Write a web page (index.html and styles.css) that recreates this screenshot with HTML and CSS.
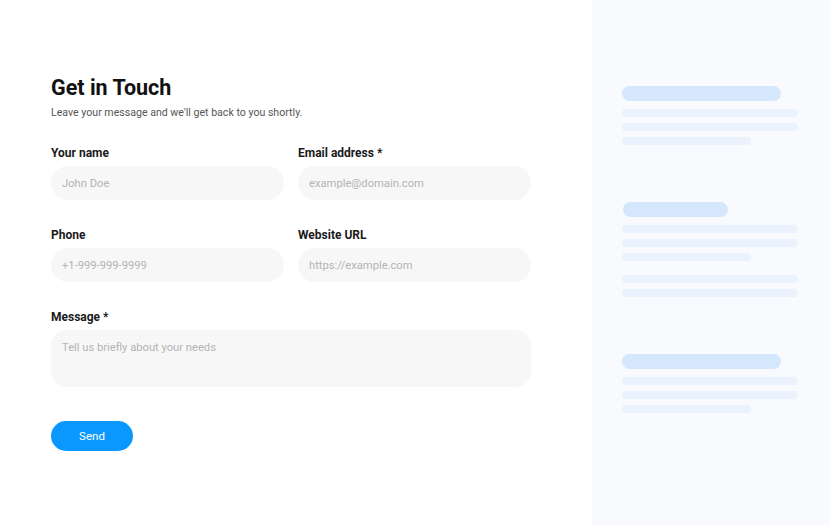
FILE: index.html
```html
<!DOCTYPE html>
<html lang="en">
<head>
<meta charset="utf-8">
<title>Get in Touch</title>
<link rel="stylesheet" href="styles.css">
</head>
<body>
<div class="page">
  <main class="main">
    <h1 class="title">Get in Touch</h1>
    <p class="subtitle">Leave your message and we'll get back to you shortly.</p>
    <form class="form">
      <div class="grid">
        <label class="field">
          <span class="label">Your name</span>
          <input class="input" type="text" placeholder="John Doe">
        </label>
        <label class="field">
          <span class="label">Email address *</span>
          <input class="input" type="email" placeholder="example@domain.com">
        </label>
        <label class="field">
          <span class="label">Phone</span>
          <input class="input" type="tel" placeholder="+1-999-999-9999">
        </label>
        <label class="field">
          <span class="label">Website URL</span>
          <input class="input" type="url" placeholder="https://example.com">
        </label>
        <label class="field field-wide">
          <span class="label">Message *</span>
          <textarea class="textarea" placeholder="Tell us briefly about your needs"></textarea>
        </label>
      </div>
      <button class="send" type="button">Send</button>
    </form>
  </main>
  <aside class="aside">
    <div class="sk-group">
      <div class="sk-title"></div>
      <div class="sk-line"></div>
      <div class="sk-line"></div>
      <div class="sk-line short"></div>
    </div>
    <div class="sk-group">
      <div class="sk-title small"></div>
      <div class="sk-line"></div>
      <div class="sk-line"></div>
      <div class="sk-line short"></div>
      <div class="sk-line para"></div>
      <div class="sk-line"></div>
    </div>
    <div class="sk-group">
      <div class="sk-title"></div>
      <div class="sk-line"></div>
      <div class="sk-line"></div>
      <div class="sk-line short"></div>
    </div>
  </aside>
</div>
</body>
</html>
```

FILE: styles.css
```css
* { box-sizing: border-box; }
html, body { margin: 0; padding: 0; background: #fff; }
body {
  font-family: Roboto, Inter, "Liberation Sans", sans-serif;
  color: #111;
}
.page {
  display: flex;
  width: 830px;
  height: 525px;
  overflow: hidden;
}
.main {
  flex: 0 0 592px;
  padding: 74px 61px 0 51px;
}
.title {
  margin: 0;
  font-size: 21.5px;
  line-height: 28px;
  font-weight: 700;
  color: #111;
}
.subtitle {
  margin: 2px 0 0;
  font-size: 10.6px;
  line-height: 18px;
  color: #555;
}
.form { margin-top: 23px; }
.grid {
  display: grid;
  grid-template-columns: 1fr 1fr;
  column-gap: 14px;
  row-gap: 27px;
  width: 480px;
}
.field { display: flex; flex-direction: column; }
.field-wide { grid-column: 1 / -1; }
.label {
  font-size: 12px;
  line-height: 16px;
  font-weight: 700;
  color: #1a1a1a;
  margin-bottom: 5px;
}
.input, .textarea {
  border: none;
  outline: none;
  background: #f7f7f7;
  font-family: inherit;
  font-size: 11.2px;
  color: #222;
  padding: 0 11px;
  width: 100%;
}
.input {
  height: 34px;
  border-radius: 17px;
}
.textarea {
  height: 57px;
  border-radius: 15px;
  padding-top: 11px;
  resize: none;
  display: block;
}
.input::placeholder, .textarea::placeholder { color: #b4b4b4; }
.send {
  margin-top: 34px;
  width: 82px;
  height: 30px;
  border: none;
  border-radius: 15px;
  background: #0a98ff;
  color: #fff;
  font-family: inherit;
  font-size: 11.5px;
  padding: 0;
}
.aside {
  flex: 0 0 238px;
  background: #f9fafe;
  padding: 86px 32px 0 30px;
  display: flex;
  flex-direction: column;
  gap: 57px;
}
.sk-group { display: flex; flex-direction: column; gap: 6px; }
.sk-title {
  width: 159px;
  height: 15px;
  border-radius: 8px;
  background: #d4e7fd;
  margin-bottom: 2px;
}
.sk-title.small { width: 105px; margin-left: 1px; }
.sk-line {
  width: 176px;
  height: 8px;
  border-radius: 4px;
  background: #eaf2fd;
}
.sk-line.short { width: 129px; }
.sk-line.para { margin-top: 8px; }
```
